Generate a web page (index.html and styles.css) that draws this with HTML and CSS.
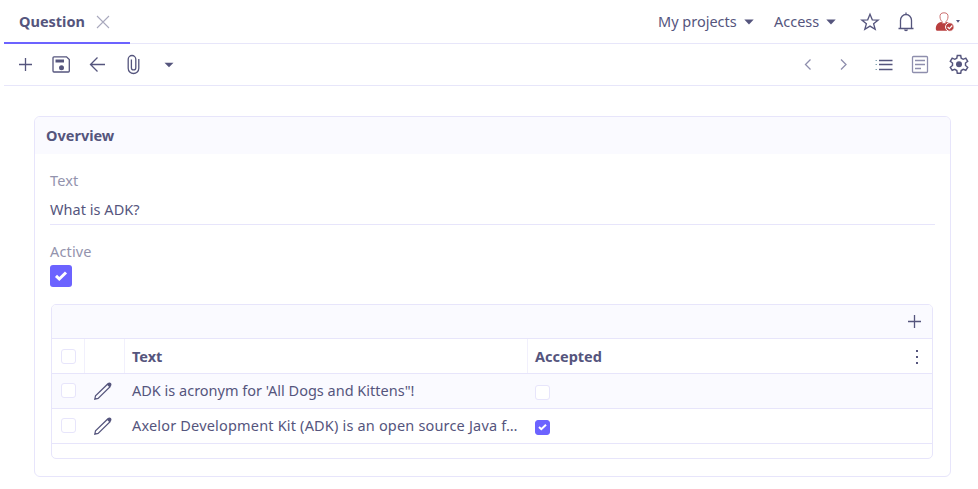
FILE: index.html
```html
<!DOCTYPE html>
<html lang="en">
<head>
<meta charset="utf-8">
<title>Question</title>
<link rel="stylesheet" href="styles.css">
</head>
<body>
<header class="topbar">
  <div class="tab"><span class="tab-title">Question</span>
    <svg class="close" width="14" height="14" viewBox="0 0 14 14"><path d="M1 1l12 12M13 1L1 13"/></svg>
  </div>
  <nav class="nav">
    <span class="projects">My projects</span><svg class="caret" width="10" height="6" viewBox="0 0 10 6"><path d="M.3.5h9.4L5 5.5z"/></svg>
    <span class="access">Access</span><svg class="caret" width="10" height="6" viewBox="0 0 10 6"><path d="M.3.5h9.4L5 5.5z"/></svg>
    <svg class="icon star" width="24" height="24" viewBox="0 0 24 24"><path d="M12 4.200l2.300 5.600 5.900.3-4.600 3.700 1.600 5.600-5.200-3.300-5.200 3.300 1.600-5.600-4.600-3.700 5.900-.3z"/></svg>
    <svg class="icon bell" width="24" height="24" viewBox="0 0 24 24"><path d="M4.500 18.500h15M6.500 18.500v-8.200a5.500 5.800 0 0 1 11 0v8.200M12 4.500v-2"/><path class="solid" d="M10 19.500h4a2 1.700 0 0 1-4 0z"/></svg>
    <svg class="user" width="20" height="20" viewBox="0 0 20 20"><path class="user-body" d="M2 18.800Q.8 18.600.8 17c0-4 1.700-6.200 5.500-7q2.700 1.400 5.400 0c3.800.8 5.300 2.500 6 5l-2 3.800z"/><path class="user-head" d="M9 .8c3.300 0 4.100 1.800 4 4-.1 2.300-1 3.800-2 4.700v1.500q-2 1.200-4 0V9.500c-1-.9-1.900-2.400-2-4.700-.1-2.200.7-4 4-4z"/><circle class="user-badge" cx="14.800" cy="15" r="4.300"/><path class="user-tick" d="M12.600 15l1.700 1.700 3-3.200"/></svg>
    <svg class="small-caret" width="4" height="3" viewBox="0 0 4 3"><path d="M0 0h4L2 2.700z"/></svg>
  </nav>
</header>
<div class="toolbar">
  <div class="cell"><svg class="icon" width="24" height="24" viewBox="0 0 24 24"><path d="M12.500 6v13M6 12.500h13"/></svg></div>
  <div class="cell"><svg class="icon" width="24" height="24" viewBox="0 0 24 24"><path d="M5 4.800h12.500l2.800 2.800V19q0 1-1 1H5q-1 0-1-1V5.800q0-1 1-1z"/><path class="solid" d="M6.500 7.500h8.500v3H6.500z"/><circle class="solid" cx="12.500" cy="15.800" r="2.500"/></svg></div>
  <div class="cell"><svg class="icon" width="24" height="24" viewBox="0 0 24 24"><path d="M5.500 12.500H20M12.500 5.500l-7 7 7 7"/></svg></div>
  <div class="cell"><svg class="icon" width="24" height="24" viewBox="0 0 24 24"><path d="M17.800 7v9.200a5.200 5.200 0 0 1-10.600 0V7.300a3.800 3.800 0 0 1 7.600 0v8.400a2.200 2.200 0 0 1-4.400 0V7.500"/></svg></div>
  <div class="cell"><svg class="caret down" width="10" height="6" viewBox="0 0 10 6"><path d="M.5.7h9L5 5.300z"/></svg></div>
  <div class="spacer"></div>
  <div class="cell muted"><svg class="icon" width="24" height="24" viewBox="0 0 24 24"><path d="M14.500 7.500l-5 5 5 5"/></svg></div>
  <div class="cell muted"><svg class="icon" width="24" height="24" viewBox="0 0 24 24"><path d="M9 7.500l5 5-5 5"/></svg></div>
  <div class="cell list"><svg class="icon" width="24" height="24" viewBox="0 0 24 24"><path d="M7 8.500h13.500M7 12.500h13.500M7 17.500h13.500"/><path class="bullets" d="M3.500 8.500H5M3.500 12.500H5M3.500 17.500H5"/></svg></div>
  <div class="cell muted"><svg class="icon" width="24" height="24" viewBox="0 0 24 24"><path d="M4.500 5.500q0-1 1-1h13q1 0 1 1v14q0 1-1 1h-13q-1 0-1-1zM7 8.500h10M7 12.500h10M7 16.500h6"/></svg></div>
  <div class="cell settings"><svg class="icon gear" width="24" height="24" viewBox="0 0 24 24"><path d="M10.300 3.500h3.400l.5 2.700 2 1.100 2.600-1.100 1.900 3.100-2.200 1.700v2.500l2.200 1.800-1.900 3-2.600-.9-2 1.100-.5 2.700h-3.400l-.5-2.700-2-1.100-2.600.9-1.900-3 2.200-1.800V11L3.300 9.300l1.900-3.100 2.600 1.100 2-1.100z"/><circle class="solid" cx="12" cy="12.300" r="3"/></svg></div>
</div>
<main class="panel">
  <h2 class="panel-title"><span class="overview">Overview</span></h2>
  <div class="fields">
    <div class="label text-label"><span class="t-text">Text</span></div>
    <div class="value"><span class="t-value">What is ADK?</span></div>
    <div class="label active-label"><span class="t-active">Active</span></div>
    <div class="check-large"><svg width="14" height="12" viewBox="0 0 14 12"><path d="M2 5.800L5.300 9 12 2.500"/></svg></div>
  </div>
  <section class="grid">
    <div class="grid-tools"><svg class="icon" width="24" height="24" viewBox="0 0 24 24"><path d="M12.500 6v13M6 12.500h13"/></svg></div>
    <div class="row head">
      <div class="c-check"><span class="box"></span></div>
      <div class="c-edit"></div>
      <div class="c-text"><span class="t-head">Text</span></div>
      <div class="c-accepted"><span class="t-accepted">Accepted</span><svg class="dots" width="4" height="16" viewBox="0 0 4 16"><path d="M1 1h2v2H1zM1 7h2v2H1zM1 13h2v2H1z"/></svg></div>
    </div>
    <div class="row item odd">
      <div class="c-check"><span class="box"></span></div>
      <div class="c-edit"><svg class="icon pencil" width="20" height="20" viewBox="0 0 20 20"><path d="M1.800 18.200l.7-3.400L14.500 3.200l2.600 2.600L5.100 17.400z"/><path class="solid" d="M13.800 3.300l1.600-1.500q1.200-.8 2.500.3 1.100 1.200.3 2.500l-1.700 1.600z"/></svg></div>
      <div class="c-text"><span class="t-row1">ADK is acronym for 'All Dogs and Kittens"!</span></div>
      <div class="c-accepted"><span class="box"></span></div>
    </div>
    <div class="row item">
      <div class="c-check"><span class="box"></span></div>
      <div class="c-edit"><svg class="icon pencil" width="20" height="20" viewBox="0 0 20 20"><path d="M1.800 18.200l.7-3.400L14.500 3.200l2.600 2.600L5.100 17.400z"/><path class="solid" d="M13.800 3.300l1.600-1.500q1.200-.8 2.500.3 1.100 1.200.3 2.500l-1.700 1.600z"/></svg></div>
      <div class="c-text"><span class="t-row2">Axelor Development Kit (ADK) is an open source Java f…</span></div>
      <div class="c-accepted"><span class="box checked"><svg width="9" height="8" viewBox="0 0 9 8"><path d="M1 4l2.300 2.200L8 1.700"/></svg></span></div>
    </div>
  </section>
</main>
</body>
</html>
```
FILE: styles.css
```css
* { box-sizing: border-box; }
body {
  margin: 0 0 0 4px;
  height: 489px;
  overflow: hidden;
  background: #fff;
  color: #55557d;
  font: 14.5px/20px "Noto Sans", sans-serif;
  white-space: nowrap;
}
svg { display: block; flex: none; fill: none; }
.topbar { display: flex; height: 44px; border-bottom: 1px solid #e7e6fa; }
.tab {
  display: flex;
  align-items: center;
  width: 126px;
  height: 44px;
  padding-left: 15px;
  border-bottom: 2px solid #6c63ff;
  font-weight: 700;
}
.tab-title { width: 77px; }
.close { margin-top: 1px; stroke: #a9a9bd; stroke-width: 1.1; }
.nav { display: flex; align-items: center; height: 43px; margin-left: auto; padding-right: 18px; }
.projects { width: 86px; padding-bottom: 2px; }
.access { width: 53px; margin-left: 19px; padding: 0 0 2px 1px; }
.caret { fill: #55557d; }
.down { margin-top: 2px; }
.icon { stroke: #55557d; stroke-width: 1.3; }
.solid { fill: #55557d; stroke: none; }
.star { margin-left: 22px; }
.bell { margin-left: 12px; }
.user { margin-left: 17px; }
.user-body { fill: #b93f3f; }
.user-head { fill: #fff; stroke: #c56060; stroke-width: .9; }
.user-badge { fill: #b93f3f; stroke: #fff; }
.user-tick { stroke: #fff; stroke-width: 1.2; }
.small-caret { fill: #55557d; margin-left: 1px; }
.toolbar { display: flex; height: 42px; padding: 0 1px 0 3px; border-bottom: 1px solid #e7e6fa; }
.cell { display: flex; align-items: center; justify-content: center; width: 36px; height: 41px; padding-bottom: 1px; }
.spacer { flex: 1; }
.muted .icon { stroke: #8e8ead; }
.list { margin-left: 4px; }
.bullets { stroke: #86a6b4; stroke-width: 1; }
.settings { margin-left: 3px; }
.gear { stroke-width: 1.45; }
.panel {
  width: 917px;
  height: 361px;
  margin: 30px 0 0 30px;
  border: 1px solid #e7e5fb;
  border-radius: 6px;
}
.panel-title {
  height: 37px;
  margin: 0;
  padding: 8px 11px;
  border-radius: 5px 5px 0 0;
  background: #fafaff;
  font-size: 14.5px;
  line-height: 20px;
}
.fields { padding: 16px 15px 0; }
.label { height: 20px; color: #9393ad; letter-spacing: .15px; }
.value { height: 35px; padding-top: 9px; border-bottom: 1px solid #e7e5fb; }
.active-label { margin-top: 16px; }
.check-large {
  display: flex;
  align-items: center;
  justify-content: center;
  width: 22px;
  height: 22px;
  margin-top: 4px;
  border-radius: 3px;
  background: #6c63ff;
}
.check-large path { stroke: #fff; stroke-width: 3; }
.grid { width: 882px; height: 155px; margin: 17px 0 0 16px; border: 1px solid #e7e5fb; border-radius: 5px; }
.grid-tools {
  display: flex;
  align-items: center;
  justify-content: flex-end;
  height: 34px;
  padding: 0 6px 1px 0;
  border-bottom: 1px solid #e7e5fb;
  border-radius: 4px 4px 0 0;
  background: #fafaff;
}
.row { display: grid; grid-template-columns: 33px 40px 403px 1fr; height: 35px; border-bottom: 1px solid #e7e5fb; }
.row > div { display: flex; align-items: center; }
.row.item > div { padding-bottom: 2px; }
.head { font-weight: 700; }
.head > div { border-right: 1px solid #f1f0fc; }
.head > .c-accepted { border-right: 0; }
.odd { background: #fafaff; }
.row > .c-check { padding-left: 9px; }
.row > .c-edit { padding-left: 8px; }
.row > .c-text { padding-left: 7px; }
.row > .c-accepted { padding-left: 7px; }
.box {
  display: flex;
  align-items: center;
  justify-content: center;
  width: 15px;
  height: 15px;
  border: 1px solid #e7e5fb;
  border-radius: 3px;
  background: #fff;
}
.c-accepted .box { margin-top: 4px; }
.checked { border-color: #6c63ff; background: #6c63ff; }
.checked path { stroke: #fff; stroke-width: 2; }
.pencil { margin-top: 2px; stroke-width: 1.2; }
.t-row2 { letter-spacing: .18px; }
.t-value { letter-spacing: .04px; }
.dots { fill: #55557d; margin: 2px 13px 0 auto; }
```
